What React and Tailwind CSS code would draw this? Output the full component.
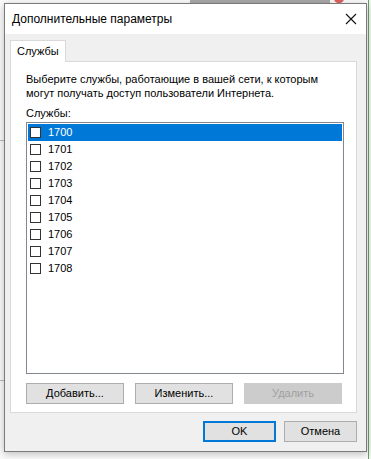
import React from 'react';

const SERVICES = ['1700', '1701', '1702', '1703', '1704', '1705', '1706', '1707', '1708'];

const font = { fontFamily: '"Liberation Sans", Arial, sans-serif' };

const Btn = ({ children, disabled, primary, className = '' }) => (
  <div
    className={
      'flex items-center justify-center h-[21px] text-[11px] ' +
      (disabled
        ? 'bg-[#cccccc] border border-[#cccccc] text-[#a0a0a0] '
        : primary
        ? 'bg-[#e1e1e1] border-2 border-[#0078d7] text-black '
        : 'bg-[#e1e1e1] border border-[#adadad] text-black ') +
      className
    }
  >
    {children}
  </div>
);

export default function App() {
  return (
    <div className="relative w-[371px] h-[459px] bg-[#fbfbfb] overflow-hidden" style={font}>
      {/* background window bits */}
      <div className="absolute left-[190px] top-0 w-[140px] h-[3px] bg-[#a9a9a9]" />
      <div className="absolute left-[334px] top-[-6px] w-[10px] h-[9px] rounded-full bg-[#e06060]" />
      <div className="absolute left-[368px] top-0 w-[3px] h-[459px] bg-[#f3f3f3] border-l border-[#5fa55f]" />
      <div className="absolute left-0 top-[140px] w-[4px] h-px bg-[#bbb]" />
      <div className="absolute left-0 top-[380px] w-[4px] h-px bg-[#bbb]" />

      {/* dialog */}
      <div className="absolute left-[4px] top-[3px] w-[363px] h-[449px] border border-[#7a7a7a] bg-[#f0f0f0] flex flex-col shadow-[0_2px_8px_rgba(0,0,0,0.25)]">
        <div className="h-[30px] bg-white flex items-center justify-between pl-[7px] pr-[9px]">
          <span className="text-[12px] text-black whitespace-nowrap">Дополнительные параметры</span>
          <svg width="12" height="12" viewBox="0 0 12 12">
            <path d="M1 1 L11 11 M11 1 L1 11" stroke="#111" strokeWidth="1.1" />
          </svg>
        </div>

        <div className="pl-[5px] pt-[6px]">
          <div className="flex">
            <div className="relative z-10 h-[22px] w-[56px] bg-white border border-[#d9d9d9] border-b-0 flex items-center pl-[6px] text-[11px]">
              Службы
            </div>
          </div>
          <div className="-mt-px w-[347px] h-[352px] bg-white border border-[#d9d9d9] pl-[15px] pt-[10px] text-[11px] text-black">
            <div className="leading-[14px] whitespace-nowrap">
              Выберите службы, работающие в вашей сети, к которым
              <br />
              могут получать доступ пользователи Интернета.
            </div>
            <div className="mt-[6px] leading-[14px]">Службы:</div>
            <div className="mt-[2px] w-[318px] h-[252px] border border-[#828790] bg-white pt-px px-px">
              {SERVICES.map((s, i) => (
                <div
                  key={s}
                  className={
                    'h-[17px] flex items-center ' + (i === 0 ? 'bg-[#0078d7] text-white' : 'text-black')
                  }
                >
                  <div className="ml-[2px] w-[11px] h-[11px] border border-[#333] bg-white" />
                  <span className="ml-[7px]">{s}</span>
                </div>
              ))}
            </div>
            <div className="mt-[9px] flex gap-[11px] w-[318px]">
              <Btn className="w-[98px]">Добавить...</Btn>
              <Btn className="w-[98px]">Изменить...</Btn>
              <Btn disabled className="w-[98px]">Удалить</Btn>
            </div>
          </div>
        </div>

        <div className="flex justify-end gap-[8px] pr-[9px] mt-[8px]">
          <Btn primary className="w-[73px]">OK</Btn>
          <Btn className="w-[73px]">Отмена</Btn>
        </div>
      </div>
    </div>
  );
}
